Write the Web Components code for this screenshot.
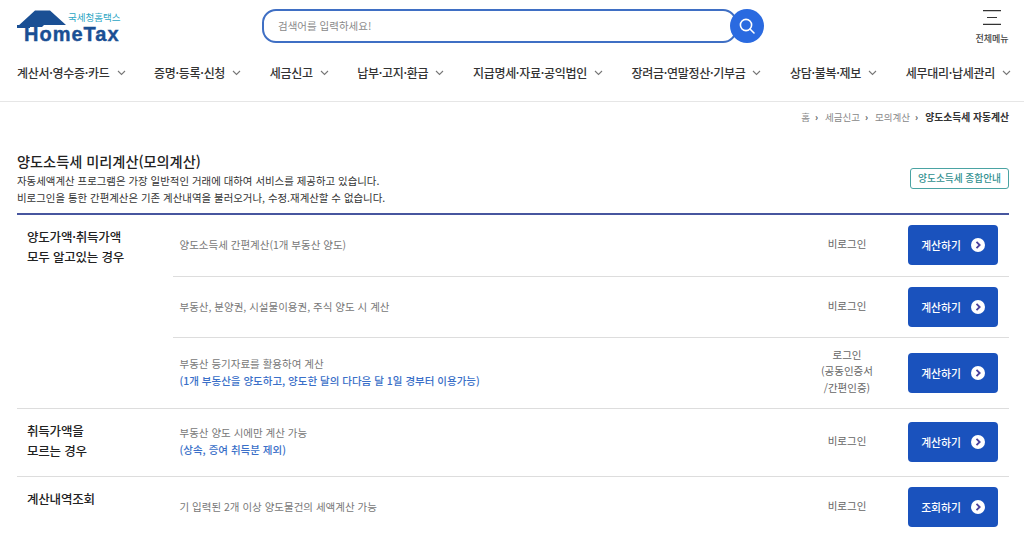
<!DOCTYPE html>
<html lang="ko">
<head>
<meta charset="utf-8">
<title>양도소득세 미리계산</title>
<style>
  html, body { margin: 0; height: 536px; overflow: hidden; background: #fff; }
  body { font-family: "Noto Sans CJK KR", "Noto Sans", sans-serif; color: #222; }
</style>
</head>
<body>
<ht-header>
  <ht-nav-item>계산서·영수증·카드</ht-nav-item>
  <ht-nav-item>증명·등록·신청</ht-nav-item>
  <ht-nav-item>세금신고</ht-nav-item>
  <ht-nav-item>납부·고지·환급</ht-nav-item>
  <ht-nav-item>지급명세·자료·공익법인</ht-nav-item>
  <ht-nav-item>장려금·연말정산·기부금</ht-nav-item>
  <ht-nav-item>상담·불복·제보</ht-nav-item>
  <ht-nav-item>세무대리·납세관리</ht-nav-item>
</ht-header>
<ht-breadcrumb current="양도소득세 자동계산">
  <span>홈</span><span>세금신고</span><span>모의계산</span>
</ht-breadcrumb>
<ht-intro heading="양도소득세 미리계산(모의계산)" link="양도소득세 종합안내">
  <div>자동세액계산 프로그램은 가장 일반적인 거래에 대하여 서비스를 제공하고 있습니다.</div>
  <div>비로그인을 통한 간편계산은 기존 계산내역을 불러오거나, 수정.재계산할 수 없습니다.</div>
</ht-intro>
<ht-group>
  <span slot="title">양도가액·취득가액<br>모두 알고있는 경우</span>
  <ht-row login="비로그인" action="계산하기" height="62">양도소득세 간편계산(1개 부동산 양도)</ht-row>
  <ht-row login="비로그인" action="계산하기" height="61">부동산, 분양권, 시설물이용권, 주식 양도 시 계산</ht-row>
  <ht-row action="계산하기" height="70">
    <span slot="login">로그인<br>(공동인증서<br>/간편인증)</span>
    부동산 등기자료를 활용하여 계산
    <span slot="note">(1개 부동산을 양도하고, 양도한 달의 다다음 달 1일 경부터 이용가능)</span>
  </ht-row>
</ht-group>
<ht-group>
  <span slot="title">취득가액을<br>모르는 경우</span>
  <ht-row login="비로그인" action="계산하기" height="67">
    부동산 양도 시에만 계산 가능
    <span slot="note">(상속, 증여 취득분 제외)</span>
  </ht-row>
</ht-group>
<ht-group>
  <span slot="title">계산내역조회</span>
  <ht-row login="비로그인" action="조회하기" height="61">기 입력된 2개 이상 양도물건의 세액계산 가능</ht-row>
</ht-group>

<script>
class HtHeader extends HTMLElement {
  constructor() {
    super();
    this.attachShadow({ mode: "open" });
  }

  connectedCallback() {
    this.shadowRoot.innerHTML = `
      <style>
        :host { display: block; height: 101px; border-bottom: 1px solid #e6e6e6; }
        .top { display: flex; height: 52px; align-items: flex-start; padding: 0 15px 0 17px; }
        .logo { position: relative; width: 104px; height: 46px; flex: none; }
        .logo svg { position: absolute; left: 0; top: 10px; }
        .brand-ko { position: absolute; left: 51px; top: 12px; font: 9.5px/11px "Liberation Sans", "Noto Sans CJK KR", sans-serif; color: #2ba6c4; white-space: nowrap; }
        .brand-en { position: absolute; left: 7px; top: 26px; font: 700 20px/16px "Liberation Sans", sans-serif; -webkit-text-stroke: .4px #1a4f94; color: #1a4f94; letter-spacing: 1px; white-space: nowrap; }
        .search { display: flex; align-items: center; margin-left: 141px; padding-top: 9px; }
        .field { width: 475px; height: 34px; box-sizing: border-box; border: 2px solid #3f6fc4; border-radius: 14px; padding-left: 14px; font-size: 10.5px; line-height: 30px; color: #8a8a8a; }
        .go { width: 34px; height: 34px; border-radius: 50%; background: #2a6ae0; margin-left: -7px; display: flex; align-items: center; justify-content: center; }
        .menu { margin-left: auto; padding-top: 10px; width: 34px; display: flex; flex-direction: column; align-items: center; font-size: 9px; font-weight: 500; color: #444; line-height: 12px; white-space: nowrap; }
        .menu svg { display: block; margin-bottom: 8px; }
        nav { display: flex; justify-content: space-between; padding: 0 13px 0 17px; height: 41px; align-items: center; }
      </style>
      <div class="top">
        <div class="logo">
          <svg width="52" height="24" viewBox="0 0 52 24">
            <path fill="#1a4f94" d="M0 17 18 .5h15L49 15H27l-2 2z"/>
            <path fill="#1a4f94" d="M0 15h13v3H0z"/>
          </svg>
          <span class="brand-ko">국세청홈택스</span>
          <span class="brand-en">HomeTax</span>
        </div>
        <div class="search">
          <div class="field">검색어를 입력하세요!</div>
          <div class="go">
            <svg width="18" height="18" viewBox="0 0 18 18" fill="none" stroke="#fff" stroke-width="1.6">
              <circle cx="8" cy="8" r="5.6"/><path d="M12 12l4 4" stroke-linecap="round"/>
            </svg>
          </div>
        </div>
        <div class="menu">
          <svg width="18" height="15" viewBox="0 0 18 15" stroke="#333" stroke-width="1.2">
            <path d="M0 .6h18M4 7.5h10M0 14.4h18"/>
          </svg>
          전체메뉴
        </div>
      </div>
      <nav><slot></slot></nav>
    `;
  }
}

class HtNavItem extends HTMLElement {
  constructor() {
    super();
    this.attachShadow({ mode: "open" });
  }

  connectedCallback() {
    this.shadowRoot.innerHTML = `
      <style>
        :host { display: flex; align-items: center; gap: 7px; font-size: 12px; font-weight: 500; color: #333; letter-spacing: -.3px; white-space: nowrap; }
        svg { display: block; }
      </style>
      <slot></slot>
      <svg width="9" height="6" viewBox="0 0 9 6" fill="none" stroke="#777" stroke-width="1.1"><path d="M1 1l3.5 3.5L8 1"/></svg>
    `;
  }
}

class HtBreadcrumb extends HTMLElement {
  constructor() {
    super();
    this.attachShadow({ mode: "open" });
  }

  connectedCallback() {
    this.shadowRoot.innerHTML = `
      <style>
        :host { display: flex; justify-content: flex-end; align-items: center; gap: 7px; height: 30px; padding: 0 15px 0 0; font-size: 9.5px; color: #888; }
        ::slotted(span)::after { content: "›"; margin-left: 5px; color: #555; font-weight: 700; }
        b { color: #333; font-weight: 700; font-size: 9.8px; }
      </style>
      <slot></slot><b>${this.getAttribute("current")}</b>
    `;
  }
}

class HtIntro extends HTMLElement {
  constructor() {
    super();
    this.attachShadow({ mode: "open" });
  }

  connectedCallback() {
    this.shadowRoot.innerHTML = `
      <style>
        :host { display: flex; align-items: flex-end; justify-content: space-between; margin: 0 15px 0 17px; height: 83px; box-sizing: border-box; padding-bottom: 7px; border-bottom: 2px solid #47569f; }
        h1 { margin: 0 0 1px; font-size: 14.2px; line-height: 20px; font-weight: 500; color: #222; }
        .text { font-size: 10.45px; line-height: 17px; color: #333; }
        a { display: block; margin-bottom: 17px; padding: 0 7px; height: 21px; line-height: 18px; box-sizing: border-box; border: 1px solid #4aa3a3; border-radius: 3px; font-size: 9.7px; font-weight: 500; color: #2f8f8f; }
      </style>
      <div>
        <h1>${this.getAttribute("heading")}</h1>
        <div class="text"><slot></slot></div>
      </div>
      <a>${this.getAttribute("link")}</a>
    `;
  }
}

class HtGroup extends HTMLElement {
  constructor() {
    super();
    this.attachShadow({ mode: "open" });
  }

  connectedCallback() {
    this.shadowRoot.innerHTML = `
      <style>
        :host { display: flex; margin: 0 15px 0 17px; border-bottom: 1px solid #ddd; }
        .title { width: 156px; flex: none; box-sizing: border-box; padding: 12px 0 0 10px; font-size: 12.5px; letter-spacing: -.2px; line-height: 20px; font-weight: 500; color: #222; }
        .rows { flex: 1; min-width: 0; }
        ::slotted(ht-row:not(:last-child)) { border-bottom: 1px solid #ddd; }
      </style>
      <div class="title"><slot name="title"></slot></div>
      <div class="rows"><slot></slot></div>
    `;
  }
}

class HtRow extends HTMLElement {
  constructor() {
    super();
    this.attachShadow({ mode: "open" });
  }

  connectedCallback() {
    this.style.height = this.getAttribute("height") + "px";
    this.shadowRoot.innerHTML = `
      <style>
        :host { display: flex; align-items: center; box-sizing: border-box; padding: 0 11px 0 6.5px; font-size: 10.5px; color: #777; }
        :host(:first-of-type) { padding-bottom: 1px; }
        .desc { flex: 1; min-width: 0; line-height: 17px; padding-bottom: 2px; }
        .note { display: block; color: #3a6fc8; font-weight: 500; }
        .login { width: 80px; flex: none; margin-right: 21px; padding-bottom: 3px; text-align: center; line-height: 16.5px; font-size: 10.5px; color: #666; }
        :host([login]) .login { padding-bottom: 1px; }
        .btn { width: 90px; height: 40px; flex: none; display: flex; align-items: center; justify-content: center; gap: 10px; border-radius: 4px; background: #1a52bd; color: #fff; font-size: 10.8px; font-weight: 500; }
        svg { display: block; }
      </style>
      <div class="desc"><slot></slot><span class="note"><slot name="note"></slot></span></div>
      <div class="login"><slot name="login">${this.getAttribute("login") || ""}</slot></div>
      <div class="btn">
        ${this.getAttribute("action")}
        <svg width="14" height="14" viewBox="0 0 14 14">
          <circle cx="7" cy="7" r="7" fill="#fff"/>
          <path d="M5.5 3.8 8.7 7l-3.2 3.2" fill="none" stroke="#4a3f9c" stroke-width="1.8"/>
        </svg>
      </div>
    `;
  }
}

customElements.define("ht-header", HtHeader);
customElements.define("ht-nav-item", HtNavItem);
customElements.define("ht-breadcrumb", HtBreadcrumb);
customElements.define("ht-intro", HtIntro);
customElements.define("ht-group", HtGroup);
customElements.define("ht-row", HtRow);
</script>
</body>
</html>
